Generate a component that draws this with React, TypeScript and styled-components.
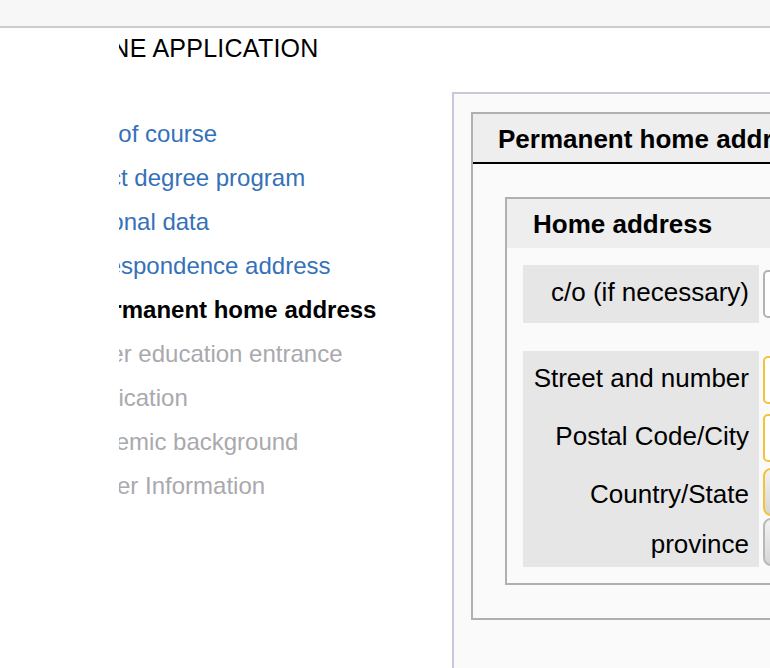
import React from "react";
import styled, { createGlobalStyle } from "styled-components";

type StepState = "done" | "active" | "todo";

const steps: { label: string; state: StepState }[] = [
  { label: "Start of course", state: "done" },
  { label: "Select degree program", state: "done" },
  { label: "Personal data", state: "done" },
  { label: "Correspondence address", state: "done" },
  { label: "Permanent home address", state: "active" },
  { label: "Higher education entrance qualification", state: "todo" },
  { label: "Academic background", state: "todo" },
  { label: "Further Information", state: "todo" },
];

const App = () => {
  return (
    <Page>
      <GlobalStyle />
      <TopBar />
      <Main>
        <Gutter />
        <Side>
          <SideInner>
            <Title>ONLINE APPLICATION</Title>
            <NavList>
              {steps.map((s) => (
                <NavItem key={s.label} $state={s.state}>
                  {s.label}
                </NavItem>
              ))}
            </NavList>
          </SideInner>
        </Side>
        <Panel>
          <Section>
            <SectionHead>Permanent home address</SectionHead>
            <SectionBody>
              <Box>
                <BoxHead>Home address</BoxHead>
                <BoxBody>
                  <FormRow>
                    <Label>c/o (if necessary)</Label>
                    <Field>
                      <TextField readOnly />
                    </Field>
                  </FormRow>
                  <Spacer />
                  <FormRow>
                    <Label>Street and number</Label>
                    <Field>
                      <TextField readOnly $required />
                    </Field>
                  </FormRow>
                  <FormRow>
                    <Label>Postal Code/City</Label>
                    <Field>
                      <TextField readOnly $required />
                    </Field>
                  </FormRow>
                  <FormRow>
                    <Label>Country/State</Label>
                    <Field>
                      <SelectBox $required />
                    </Field>
                  </FormRow>
                  <FormRow>
                    <Label>province</Label>
                    <Field>
                      <SelectBox />
                    </Field>
                  </FormRow>
                </BoxBody>
              </Box>
            </SectionBody>
          </Section>
        </Panel>
      </Main>
    </Page>
  );
};

export default App;

const GlobalStyle = createGlobalStyle`
  html, body {
    margin: 0;
    padding: 0;
    background: #ffffff;
  }
  body {
    font-family: "Liberation Sans", Arial, Helvetica, sans-serif;
    color: #000;
    overflow: hidden;
  }
`;

const Page = styled.div`
  width: 770px;
  height: 668px;
  overflow: hidden;
`;

const TopBar = styled.div`
  height: 26px;
  background-color: #f7f7f7;
  border-bottom: 2px solid #cccccc;
`;

const Main = styled.div`
  display: flex;
  align-items: flex-start;
  height: 640px;
  overflow: hidden;
`;

const Gutter = styled.div`
  flex: 0 0 119px;
`;

const Side = styled.div`
  flex: 0 0 333px;
  overflow: hidden;
`;

const SideInner = styled.div`
  margin-left: -73px;
  width: 420px;
`;

const Title = styled.h1`
  margin: 5px 0 0 6px;
  font-size: 25px;
  line-height: 30px;
  letter-spacing: 0.25px;
  font-weight: normal;
  white-space: nowrap;
`;

const NavList = styled.ul`
  list-style: none;
  margin: 49px 0 0;
  padding: 0 0 0 15px;
  width: 340px;
`;

const NavItem = styled.li<{ $state: StepState }>`
  font-size: 24px;
  line-height: 44px;
  padding-left: ${(p) => (p.$state === "active" ? "22px" : "0")};
  font-weight: ${(p) => (p.$state === "active" ? "bold" : "normal")};
  color: ${(p) =>
    p.$state === "done" ? "#3571b8" : p.$state === "active" ? "#000" : "#a9a9ae"};
`;

const Panel = styled.div`
  flex: 0 0 700px;
  align-self: stretch;
  margin-top: 64px;
  padding: 18px 0 0 17px;
  background-color: #fafafa;
  border-top: 2px solid #c6c8dc;
  border-left: 2px solid #c6c8dc;
`;

const Section = styled.div`
  width: 660px;
  border: 2px solid #b0b0b0;
  background-color: #fafafa;
`;

const SectionHead = styled.div`
  height: 48px;
  line-height: 50px;
  padding-left: 25px;
  font-size: 26px;
  font-weight: bold;
  white-space: nowrap;
  background-color: #eeeeee;
  border-bottom: 2px solid #000;
`;

const SectionBody = styled.div`
  padding: 33px 0 33px 32px;
`;

const Box = styled.div`
  width: 600px;
  border: 2px solid #b0b0b0;
  background-color: #fafafa;
`;

const BoxHead = styled.div`
  height: 49px;
  line-height: 51px;
  padding-left: 26px;
  font-size: 26px;
  font-weight: bold;
  background-color: #eeeeee;
`;

const BoxBody = styled.div`
  padding: 17px 0 16px 16px;
`;

const FormRow = styled.div`
  display: flex;
  align-items: stretch;
`;

const Spacer = styled.div`
  height: 28px;
`;

const Label = styled.div`
  flex: 0 0 236px;
  box-sizing: border-box;
  padding: 12px 10px 0 0;
  font-size: 26px;
  line-height: 30px;
  text-align: right;
  white-space: nowrap;
  background-color: #e6e6e6;
`;

const Field = styled.div`
  display: flex;
  align-items: flex-start;
  padding-left: 4px;
`;

const TextField = styled.input<{ $required?: boolean }>`
  box-sizing: border-box;
  width: 300px;
  height: 48px;
  margin: 5px 0;
  border: 2px solid ${(p) => (p.$required ? "#f5c33b" : "#b3b3b3")};
  border-radius: 5px;
  background-color: #ffffff;
  outline: none;
`;

const SelectBox = styled.div<{ $required?: boolean }>`
  box-sizing: border-box;
  width: 300px;
  height: 48px;
  margin: 1px 0;
  border: 2px solid ${(p) => (p.$required ? "#f5c33b" : "#b8b8b8")};
  border-radius: 8px;
  background: linear-gradient(to bottom, #f2f2f2, #d6d6d6);
`;
